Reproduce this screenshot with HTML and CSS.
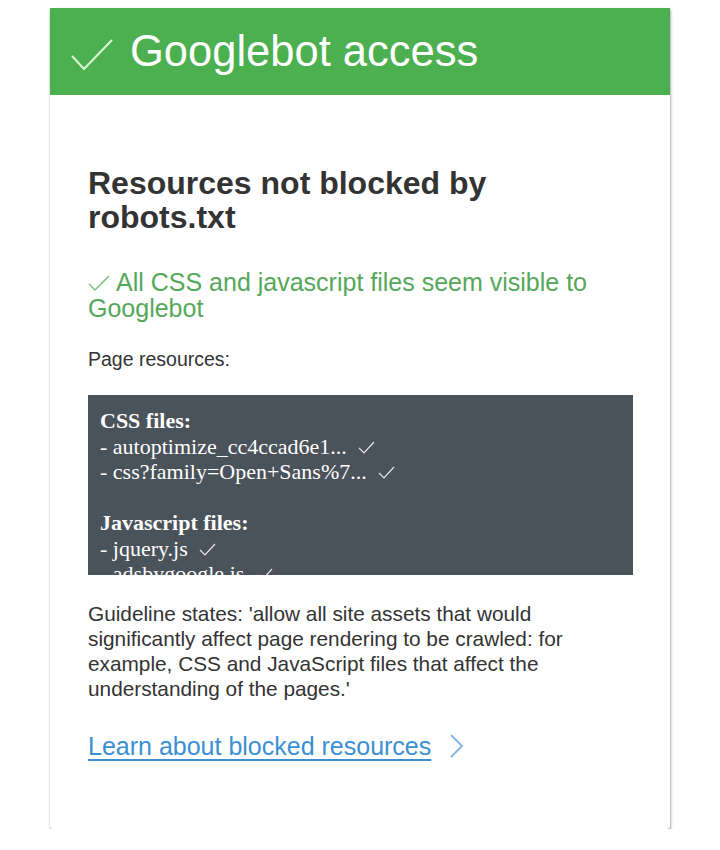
FILE: index.html
```html
<!DOCTYPE html>
<html lang="en">
  <head>
    <meta charset="UTF-8" />
    <meta name="viewport" content="width=device-width, initial-scale=1.0" />
    <title>Googlebot access</title>
    <link rel="stylesheet" href="styles.css">
  </head>
  <body>
    <div class="card">
      <div class="card-head">
        <svg class="head-check" width="44" height="34" viewBox="0 0 44 34">
          <polyline points="2,18 14,31 42,2" />
        </svg>
        <h1>Googlebot access</h1>
      </div>

      <div class="card-body">
        <h2>Resources not blocked by robots.txt</h2>

        <p class="ok">
          <svg class="ok-check" width="22" height="16" viewBox="0 0 22 16">
            <polyline points="1,9 7,15 21,1" />
          </svg>All CSS and javascript files seem visible to Googlebot
        </p>

        <p class="label">Page resources:</p>

        <div class="files">
          <b>CSS files:</b><br />
          - autoptimize_cc4ccad6e1...
          <svg class="tick" width="17" height="13" viewBox="0 0 17 13"><polyline points="1,7 6,12 16,1" /></svg><br />
          - css?family=Open+Sans%7...
          <svg class="tick" width="17" height="13" viewBox="0 0 17 13"><polyline points="1,7 6,12 16,1" /></svg><br />
          <br />
          <b>Javascript files:</b><br />
          - jquery.js
          <svg class="tick" width="17" height="13" viewBox="0 0 17 13"><polyline points="1,7 6,12 16,1" /></svg><br />
          - adsbygoogle.js
          <svg class="tick" width="17" height="13" viewBox="0 0 17 13"><polyline points="1,7 6,12 16,1" /></svg>
        </div>

        <p class="guide">
          Guideline states: 'allow all site assets that would significantly
          affect page rendering to be crawled: for example, CSS and JavaScript
          files that affect the understanding of the pages.'
        </p>

        <div class="more">
          <a href="#">Learn about blocked resources</a>
          <svg class="chevron" width="16" height="26" viewBox="0 0 16 26">
            <polyline points="2,2 13,13 2,24" />
          </svg>
        </div>
      </div>
    </div>
  </body>
</html>
```

FILE: styles.css
```css
body {
  margin: 0;
  background: #ffffff;
  font-family: "Liberation Sans", Arial, sans-serif;
}

.card {
  width: 620px;
  margin: 8px 0 0 50px;
  background: #fff;
  box-shadow: 0 1px 2px rgba(0, 0, 0, 0.25), 1px 2px 3px rgba(0, 0, 0, 0.25);
  border-radius: 0 0 3px 3px;
}

.card-head {
  background: #4caf50;
  height: 87px;
  display: flex;
  align-items: center;
  padding-left: 20px;
}

.head-check {
  margin: 6px 16px 0 0;
}

.head-check polyline {
  fill: none;
  stroke: #d8f5d0;
  stroke-width: 2.2;
}

.card-head h1 {
  margin: 0;
  color: #fff;
  font-weight: normal;
  font-size: 43.5px;
}

.card-body {
  padding: 71px 37px 68px 38px;
}

.card-body h2 {
  margin: 0;
  color: #333;
  font-size: 32px;
  line-height: 34px;
}

.ok {
  margin: 35px 0 0;
  color: #55a85a;
  font-size: 25px;
  line-height: 26px;
}

.ok-check {
  margin-right: 6px;
}

.ok-check polyline {
  fill: none;
  stroke: #7cc17f;
  stroke-width: 1.5;
}

.label {
  margin: 26px 0 0;
  color: #333;
  font-size: 19.5px;
  line-height: 24px;
}

/* file list is cut off at a fixed height, like a scroll box */
.files {
  box-sizing: border-box;
  margin-top: 24px;
  height: 180px;
  overflow: hidden;
  padding: 13px 12px 0;
  background: #4a525a;
  color: #fff;
  font-family: "Liberation Serif", "Times New Roman", serif;
  font-size: 22px;
  line-height: 25.5px;
}

.tick {
  margin-left: 6px;
}

.tick polyline {
  fill: none;
  stroke: #e6e8ea;
  stroke-width: 1.2;
}

.guide {
  margin: 26px 0 0;
  color: #333;
  font-size: 20.8px;
  line-height: 25px;
}

.more {
  margin-top: 30px;
  height: 30px;
  display: flex;
  align-items: center;
}

.more a {
  color: #3b8fd3;
  font-size: 25px;
  text-decoration: underline;
  text-underline-offset: 4px;
}

.chevron {
  margin-left: 18px;
}

.chevron polyline {
  fill: none;
  stroke: #8ab6e0;
  stroke-width: 2;
}
```
